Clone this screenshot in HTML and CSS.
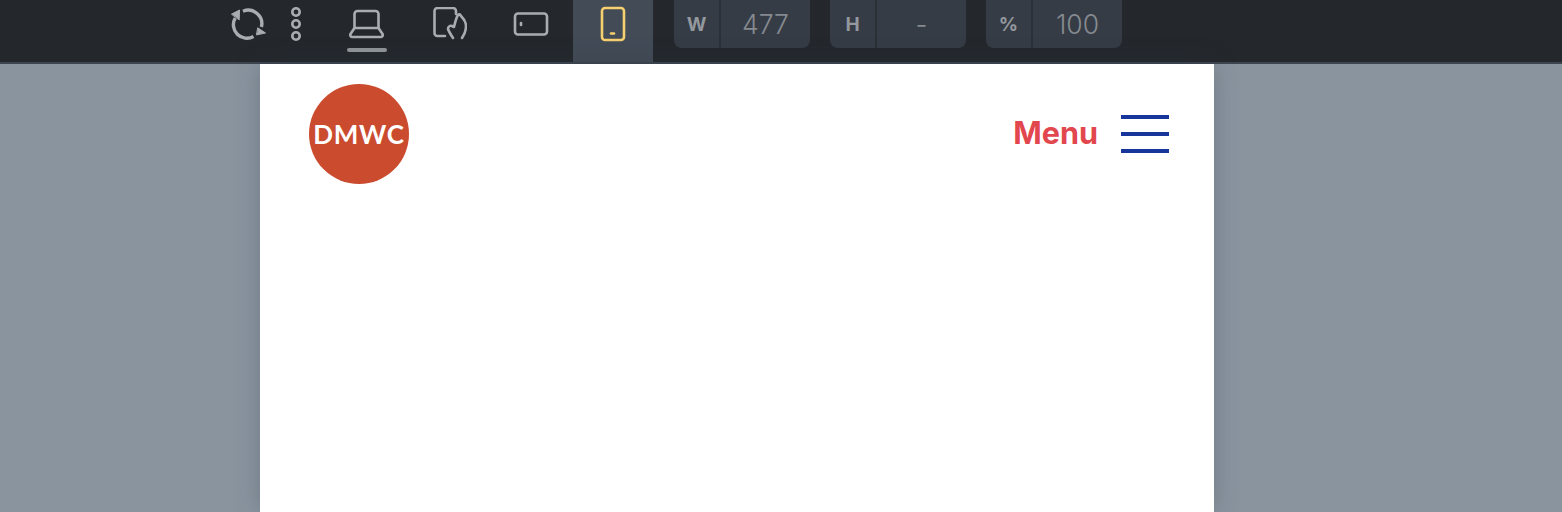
FILE: index.html
```html
<!DOCTYPE html>
<html lang="en">
<head>
<meta charset="utf-8">
<title>DMWC preview</title>
<link rel="stylesheet" href="styles.css">
</head>
<body>
<header class="toolbar">
  <button class="tool tool-refresh" aria-label="Refresh">
    <svg width="36" height="32" viewBox="0 0 36 32" class="ico"><path class="thick" d="M12 3.300A13.500 13.500 0 0 1 30.400 19"/><path class="thick" d="M22.500 28.500A13.500 13.500 0 0 1 4.200 10"/><path class="solid" d="M27 20 34.500 25 25.800 26.800z"/><path class="solid" d="M0.800 6 8.500 2 8.200 11.500z"/></svg>
  </button>
  <button class="tool tool-dots" aria-label="More">
    <svg width="12" height="36" viewBox="0 0 12 36" class="ico"><circle cx="6" cy="6" r="3.700"/><circle cx="6" cy="18" r="3.700"/><circle cx="6" cy="30" r="3.700"/></svg>
  </button>
  <button class="tool tool-laptop active-line" aria-label="Laptop">
    <svg width="36" height="30" viewBox="0 0 36 30" class="ico"><path d="M5.500 19V5a3 3 0 0 1 3-3h18a3 3 0 0 1 3 3v14l4 6a2 2 0 0 1-1.500 3H3a2 2 0 0 1-1.500-3z"/><path d="M5.500 19h24"/></svg>
  </button>
  <button class="tool tool-touch" aria-label="Tablet touch">
    <svg width="34" height="34" viewBox="0 0 34 34" class="ico"><path d="M12 29H4.500A3 3 0 0 1 1.500 26V4a3 3 0 0 1 3-3H20a3 3 0 0 1 3 3v3"/><path d="M20 31C18 28 16 25 15 22 15 20 17 18 19 19L21 20C22 16 23 11 25 8 26 7 27 7 28 9 31 12 33 15 33 19 33 24 31 28 29 31"/></svg>
  </button>
  <button class="tool tool-land" aria-label="Tablet landscape">
    <svg width="36" height="26" viewBox="0 0 36 26" class="ico"><rect x="2" y="2.500" width="32" height="21" rx="3"/><path d="M8 12v2"/></svg>
  </button>
  <button class="tool tool-portrait" aria-label="Phone">
    <svg width="26" height="36" viewBox="0 0 26 36" class="ico-on"><rect x="2" y="2" width="22" height="32" rx="3"/><path d="M11 27.500h3"/></svg>
  </button>
  <div class="field field-w"><span class="field-key">W</span><span class="field-val">477</span></div>
  <div class="field field-h"><span class="field-key">H</span><span class="field-val">-</span></div>
  <div class="field field-p"><span class="field-key">%</span><span class="field-val">100</span></div>
</header>
<main class="canvas">
  <section class="page">
    <nav class="nav">
      <div class="logo">DMWC</div>
      <div class="menu">
        <span class="menu-label">Menu</span>
        <span class="burger"><i></i><i></i><i></i></span>
      </div>
    </nav>
  </section>
</main>
</body>
</html>
```
FILE: styles.css
```css
* { box-sizing: border-box; }
html, body { margin: 0; height: 100%; overflow: hidden; }
body { display: flex; flex-direction: column; background: #8a949f; font-family: Inter, "Liberation Sans", sans-serif; }

.toolbar {
  display: flex;
  align-items: flex-start;
  height: 64px;
  flex: none;
  padding-left: 231px;
  background: #24282d;
  border-bottom: 2px solid #3d4650;
}
.tool {
  display: flex;
  align-items: center;
  justify-content: center;
  height: 62px;
  padding: 0 0 14px;
  background: none;
  border: 0;
}
.ico, .ico-on { fill: none; stroke-width: 2.600; stroke-linecap: round; stroke-linejoin: round; }
.ico { stroke: #a9adb1; }
.ico-on { stroke: #f6cf6f; }
.ico .thick { stroke-width: 3.400; stroke-linecap: butt; }
.ico .solid { fill: #a9adb1; stroke-width: 1; }

.tool-refresh { width: 36px; }
.tool-dots { width: 12px; margin-left: 23px; }
.tool-laptop { width: 40px; margin-left: 45px; position: relative; }
.active-line::after {
  content: "";
  position: absolute;
  left: 0;
  right: 0;
  top: 48px;
  height: 4px;
  border-radius: 2px;
  background: #8c9196;
}
.tool-touch { width: 36px; margin-left: 45px; }
.tool-land { width: 36px; margin-left: 45px; }
.tool-portrait { width: 80px; margin-left: 24px; background: #424b56; }

.field {
  display: flex;
  width: 136px;
  height: 48px;
  background: #363c45;
  border-radius: 0 0 8px 8px;
  color: #858a91;
}
.field-w { margin-left: 21px; }
.field-h, .field-p { margin-left: 20px; }
.field-key {
  display: flex;
  align-items: center;
  justify-content: center;
  width: 47px;
  font-size: 19px;
  font-weight: 700;
  color: #93989e;
  border-right: 2px solid #2c3138;
}
.field-val {
  flex: 1;
  display: flex;
  align-items: center;
  justify-content: center;
  font-size: 26.500px;
  font-weight: 300;
}

.canvas { flex: 1; display: flex; padding-left: 260px; }
.page {
  width: 954px;
  background: #fff;
  box-shadow: 0 0 24px rgba(40, 50, 60, .25);
}
.nav {
  display: flex;
  align-items: center;
  justify-content: space-between;
  padding: 20px 45px 0 49px;
}
.logo {
  display: flex;
  align-items: center;
  justify-content: center;
  width: 100px;
  height: 100px;
  border-radius: 50%;
  background: #cb4b2f;
  color: #fff;
  font-family: Lato, sans-serif;
  font-weight: 700;
  font-size: 26px;
  letter-spacing: .8px;
}
.menu { display: flex; align-items: center; gap: 23px; }
.menu-label { font-size: 30.600px; font-weight: 700; color: #e2474e; margin-bottom: 3px; }
.burger { display: flex; flex-direction: column; gap: 12.500px; width: 48px; }
.burger i { display: block; height: 4.500px; background: #17359a; }
```
